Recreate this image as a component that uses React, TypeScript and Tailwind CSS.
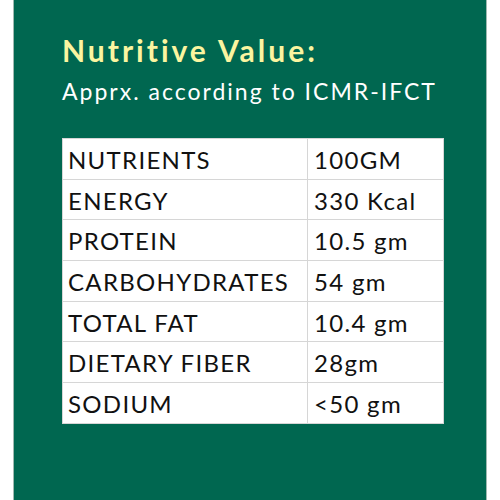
const rows = [
  ['NUTRIENTS', '100GM'],
  ['ENERGY', '330 Kcal'],
  ['PROTEIN', '10.5 gm'],
  ['CARBOHYDRATES', '54 gm'],
  ['TOTAL FAT', '10.4 gm'],
  ['DIETARY FIBER', '28gm'],
  ['SODIUM', '<50 gm'],
];

export default function App() {
  return (
    <div className="w-[500px] h-[500px] bg-white flex">
      <div className="ml-[13px] w-[474px] h-full bg-[#006750] border-x border-[#9fb8b0] pl-[48px] pt-[32px]">
        <h1 className="text-[30px] leading-[36px] font-bold text-[#fbf5a0] font-['Lato',sans-serif] tracking-[3px]">
          Nutritive Value:
        </h1>
        <p className="mt-[9px] text-[23px] leading-[28px] text-white font-['Lato',sans-serif] tracking-[2px]">
          Apprx. according to ICMR-IFCT
        </p>
        <table className="mt-[33px] w-[382px] bg-white border-collapse font-['Lato',sans-serif] text-[24px] tracking-[1.3px] text-[#111]">
          <tbody>
            {rows.map(([name, value]) => (
              <tr key={name} className="h-[40.7px]">
                <td className="w-[245px] border border-[#d6d6d6] pl-[5px] pt-[2px] align-middle">{name}</td>
                <td className="border border-[#d6d6d6] pl-[6px] pt-[2px] align-middle">{value}</td>
              </tr>
            ))}
          </tbody>
        </table>
      </div>
    </div>
  );
}
